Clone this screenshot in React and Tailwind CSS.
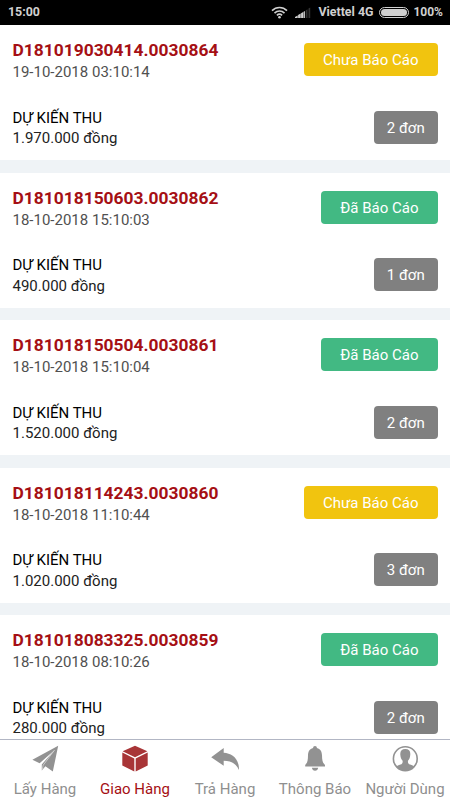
import React, { useState } from 'react';

const orders = [
  { id: 'D181019030414.0030864', date: '19-10-2018 03:10:14', amount: '1.970.000', reported: false, count: 2 },
  { id: 'D181018150603.0030862', date: '18-10-2018 15:10:03', amount: '490.000', reported: true, count: 1 },
  { id: 'D181018150504.0030861', date: '18-10-2018 15:10:04', amount: '1.520.000', reported: true, count: 2 },
  { id: 'D181018114243.0030860', date: '18-10-2018 11:10:44', amount: '1.020.000', reported: false, count: 3 },
  { id: 'D181018083325.0030859', date: '18-10-2018 08:10:26', amount: '280.000', reported: true, count: 2 },
];

// --- Icons ---

function TabIcon({ children }) {
  return (
    <svg width="28" height="28" viewBox="0 0 28 28" fill="currentColor">
      {children}
    </svg>
  );
}

function PlaneIcon() {
  return (
    <TabIcon>
      <path d="M27.2 0.8L1.4 14.8L8.6 18.2L23.4 5.2L10.8 19.4V25.4L14.4 21.3L21.8 26.6Z" />
      <path d="M23.6 5L12.2 20.2L11.2 24.6" fill="none" stroke="white" strokeWidth="0.5" />
    </TabIcon>
  );
}

function CubeIcon() {
  return (
    <TabIcon>
      <path d="M14 0.8L26.4 6.3L14 12.3L1.6 6.3Z" />
      <path d="M1.3 7.6L13.3 13.5V26.6L1.3 20.6Z" />
      <path d="M26.7 7.6L14.7 13.5V26.6L26.7 20.6Z" />
    </TabIcon>
  );
}

function UndoIcon() {
  return (
    <TabIcon>
      <path d="M0.2 12.2L12.7 3V7.8C21 8.2 28.4 14 28 25C25.2 19 20.4 15.8 12.7 15.8V20.8Z" />
    </TabIcon>
  );
}

function BellIcon() {
  return (
    <TabIcon>
      <path d="M14 1.1C15.2 1.1 15.8 1.9 15.9 2.9C19.4 3.7 20.9 6.4 21 10.2C21.1 15.4 21.6 17.6 24 20.1V21.4H4.2V20.1C6.5 17.6 6.9 15.4 7 10.2C7.1 6.4 8.6 3.7 12.1 2.9C12.2 1.9 12.8 1.1 14 1.1Z" />
      <path d="M10.9 22.7H17.2C16.9 24.7 15.7 25.7 14 25.7C12.4 25.7 11.2 24.7 10.9 22.7Z" />
    </TabIcon>
  );
}

function ContactIcon() {
  return (
    <TabIcon>
      <circle cx="14.3" cy="13.7" r="11.9" fill="none" stroke="currentColor" strokeWidth="1.6" />
      <path d="M14.3 4C17.8 4 19.6 6.2 19.3 9.6C19.1 12.7 18.4 14.4 17 15.8C16.7 17.8 17.2 18.9 19.1 19.6C21.2 20.3 22.6 21 23 21.7C20.6 24.6 17.6 25.7 14.3 25.7C11 25.7 8 24.6 5.6 21.7C6 21 7.4 20.3 9.5 19.6C11.4 18.9 11.9 17.8 11.6 15.8C10.2 14.4 9.5 12.7 9.3 9.6C9 6.2 10.8 4 14.3 4Z" />
    </TabIcon>
  );
}

function WifiIcon() {
  return (
    <svg width="17" height="13" viewBox="0 0 17 13" fill="none" stroke="#d0d0d0" strokeWidth="1.6">
      <path d="M1 4.6C5.2 0.4 11.8 0.4 16 4.6" />
      <path d="M3.5 7.1C6.3 4.3 10.7 4.3 13.5 7.1" />
      <path d="M5.9 9.4C7.4 8 9.6 8 11.1 9.4" />
      <circle cx="8.5" cy="11.3" r="1.3" fill="#d0d0d0" stroke="none" />
    </svg>
  );
}

function SignalIcon() {
  return (
    <svg width="16" height="11" viewBox="0 0 16 11">
      <path d="M0 11V9.9L2.7 8.4V11zM3.1 11V8.1L5.7 6.6V11zM6.1 11V6.3L8.2 5V11zM8.6 11V4.8L9.9 4V11z" fill="#d0d0d0" />
      <path d="M10.7 11V3.4L12.5 2.3V11zM13.5 11V1.5L15.2 0.4V11z" fill="#333" />
    </svg>
  );
}

const tabs = [
  { key: 'pickup', label: 'Lấy Hàng', Icon: PlaneIcon },
  { key: 'delivery', label: 'Giao Hàng', Icon: CubeIcon },
  { key: 'return', label: 'Trả Hàng', Icon: UndoIcon },
  { key: 'notify', label: 'Thông Báo', Icon: BellIcon },
  { key: 'user', label: 'Người Dùng', Icon: ContactIcon },
];

function StatusBar() {
  return (
    <div className="flex h-[25px] shrink-0 items-center bg-black pr-[7px] pl-2 text-[12.4px] font-bold text-[#d0d0d0]">
      <span>15:00</span>
      <div className="ml-auto flex items-center">
        <WifiIcon />
        <div className="ml-[7px]">
          <SignalIcon />
        </div>
        <span className="ml-[7px]">Viettel 4G</span>
        <span className="ml-[6px] h-[11px] w-[30px] rounded-full border border-[#d0d0d0] p-px">
          <span className="block h-full rounded-full bg-[#d0d0d0]" />
        </span>
        <span className="ml-[4px] text-[12px]">100%</span>
      </div>
    </div>
  );
}

function OrderCard({ order }) {
  return (
    <div className="flex h-[135px] shrink-0 justify-between bg-white px-[12.5px]">
      <div className="flex flex-col pt-[15px]">
        <div className="text-[17.4px] leading-[21px] font-bold text-[#a50f14]">{order.id}</div>
        <div className="mt-px text-[15px] leading-[21px] text-[#505050]">{order.date}</div>
        <div className="mt-[24.5px] text-[15px] leading-[21px] text-black">DỰ KIẾN THU</div>
        <div className="-mt-[0.5px] text-[15px] leading-[21px] text-[#222]">{order.amount} đồng</div>
      </div>
      <div className="flex flex-col items-end justify-between pt-[18px] pb-[16.5px] text-[15px] text-white">
        <div
          className={`flex h-[33px] items-center rounded-[4px] px-[19px] pt-[2px] ${order.reported ? 'bg-[#42b983]' : 'bg-[#f1c40f]'}`}
        >
          {order.reported ? 'Đã Báo Cáo' : 'Chưa Báo Cáo'}
        </div>
        <div className="flex h-[33px] items-center rounded-[4px] bg-[#808080] px-[12.8px] pt-[2px]">
          {order.count} đơn
        </div>
      </div>
    </div>
  );
}

function TabBar({ active, onChange }) {
  return (
    <div className="flex h-[61px] shrink-0 border-t border-[#b2b6c4] bg-white">
      {tabs.map(({ key, label, Icon }) => (
        <button
          key={key}
          onClick={() => onChange(key)}
          className={`flex w-[90px] flex-col items-center pt-[5px] text-[15px] whitespace-nowrap ${
            active === key ? 'text-[#a50f14]' : 'text-[#8f8f8f]'
          }`}
        >
          <span className={active === key ? 'text-[#a83537]' : 'text-[#929292]'}>
            <Icon />
          </span>
          <span className="mt-[6px] leading-[21px]">{label}</span>
        </button>
      ))}
    </div>
  );
}

export default function App() {
  const [activeTab, setActiveTab] = useState('delivery');

  return (
    <div className="flex h-[800px] w-[450px] flex-col overflow-hidden bg-white font-['Roboto',sans-serif]">
      <StatusBar />
      <div className="flex min-h-0 flex-1 flex-col gap-[12.5px] overflow-hidden bg-[#eff3f6]">
        {orders.map((order) => (
          <OrderCard key={order.id} order={order} />
        ))}
      </div>
      <TabBar active={activeTab} onChange={setActiveTab} />
    </div>
  );
}
